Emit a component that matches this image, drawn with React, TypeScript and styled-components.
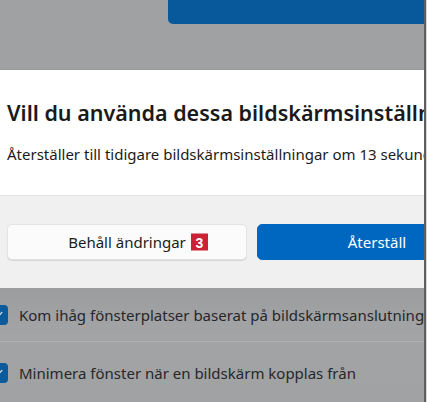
import styled, { createGlobalStyle } from 'styled-components';

const GlobalStyle = createGlobalStyle`
    html, body {
        margin: 0;
        padding: 0;
        background: #dcdcdc;
    }
    body {
        font-family: 'Noto Sans', 'Open Sans', sans-serif;
        color: #1b1b1b;
    }
`

const Screen = styled.div`
    display: flex;
    width: 427px;
    height: 402px;
    overflow: hidden;
`
const Viewport = styled.div`
    display: flex;
    flex-direction: column;
    width: 424px;
    flex-shrink: 0;
    overflow: hidden;
    background: #a0a1a2;
`
const EdgeLine = styled.div`
    width: 2px;
    flex-shrink: 0;
    background: #5d5e60;
`
const EdgeFill = styled.div`
    flex: 1;
    background: #d8d8d8;
`
const TopArea = styled.div`
    height: 70px;
    flex-shrink: 0;
    border-bottom: 1px solid #97989a;
    box-sizing: border-box;
`
const DimmedButton = styled.div`
    margin-left: 168px;
    width: 300px;
    height: 24px;
    background: #07599c;
    border-radius: 0 0 0 5px;
`
const Dialog = styled.div`
    display: flex;
    flex-direction: column;
    height: 218px;
    flex-shrink: 0;
    background: #ffffff;
    white-space: nowrap;
`
const DialogBody = styled.div`
    display: flex;
    flex-direction: column;
    padding: 29px 0 0 7px;
    height: 126px;
    box-sizing: border-box;
    border-bottom: 1px solid #e5e5e5;
`
const Title = styled.h1`
    margin: 0;
    font-size: 21.5px;
    font-weight: 600;
    line-height: 28px;
    color: #1a1a1a;
`
const Subtitle = styled.p`
    margin: 17px 0 0;
    font-size: 15px;
    line-height: 20px;
    color: #1b1b1b;
`
const Footer = styled.div`
    flex: 1;
    display: flex;
    gap: 10px;
    padding: 28px 0 0 7px;
    background: #f0f0f0;
`
const Button = styled.div<{ $primary?: boolean }>`
    display: flex;
    align-items: center;
    justify-content: center;
    width: 240px;
    height: 36px;
    flex-shrink: 0;
    box-sizing: border-box;
    border-radius: 5px;
    font-size: 15px;
    background: ${p => p.$primary ? '#0067c0' : '#fbfbfb'};
    color: ${p => p.$primary ? '#ffffff' : '#1b1b1b'};
    border: 1px solid ${p => p.$primary ? '#0067c0' : '#e3e3e3'};
    box-shadow: ${p => p.$primary ? 'none' : '0 1px 0 #d6d6d6'};
`
const ButtonLabel = styled.span`
    position: relative;
`
const Badge = styled.span`
    position: absolute;
    left: calc(100% + 5px);
    top: 50%;
    transform: translateY(-50%);
    display: flex;
    align-items: center;
    justify-content: center;
    width: 17px;
    height: 17px;
    background: #cc2236;
    color: #ffffff;
    font-family: 'Liberation Sans', Arial, sans-serif;
    font-weight: 700;
    font-size: 14px;
`
const SettingsList = styled.div`
    flex: 1;
    display: flex;
    flex-direction: column;
    background: linear-gradient(#9c9d9f, #a3a4a5 40%, #a0a1a2);
`
const SettingRow = styled.div<{ $height: number }>`
    display: flex;
    align-items: center;
    gap: 11px;
    height: ${p => p.$height}px;
    flex-shrink: 0;
    border-bottom: 1px solid #aeafb0;
    white-space: nowrap;
    font-size: 15px;
    color: #26272a;
`
const Checkbox = styled.span`
    display: flex;
    align-items: center;
    justify-content: center;
    width: 20px;
    height: 20px;
    margin-left: -12px;
    flex-shrink: 0;
    border-radius: 4px;
    background: #0b5a9b;
`

function Check() {
    return (
        <svg width="12" height="12" viewBox="0 0 12 12">
            <path d="M2.5 6.2 L5 8.6 L9.8 3.6" fill="none" stroke="#c9d6e3" strokeWidth="1.4" strokeLinecap="round" strokeLinejoin="round" />
        </svg>
    )
}

export default function App() {
    return (
        <>
            <GlobalStyle />
            <Screen>
                <Viewport>
                    <TopArea>
                        <DimmedButton />
                    </TopArea>
                    <Dialog>
                        <DialogBody>
                            <Title>Vill du använda dessa bildskärmsinställningar?</Title>
                            <Subtitle>Återställer till tidigare bildskärmsinställningar om 13 sekunder.</Subtitle>
                        </DialogBody>
                        <Footer>
                            <Button>
                                <ButtonLabel>
                                    Behåll ändringar
                                    <Badge>3</Badge>
                                </ButtonLabel>
                            </Button>
                            <Button $primary>Återställ</Button>
                        </Footer>
                    </Dialog>
                    <SettingsList>
                        <SettingRow $height={53}>
                            <Checkbox><Check /></Checkbox>
                            Kom ihåg fönsterplatser baserat på bildskärmsanslutning
                        </SettingRow>
                        <SettingRow $height={62}>
                            <Checkbox><Check /></Checkbox>
                            Minimera fönster när en bildskärm kopplas från
                        </SettingRow>
                    </SettingsList>
                </Viewport>
                <EdgeLine />
                <EdgeFill />
            </Screen>
        </>
    )
}
